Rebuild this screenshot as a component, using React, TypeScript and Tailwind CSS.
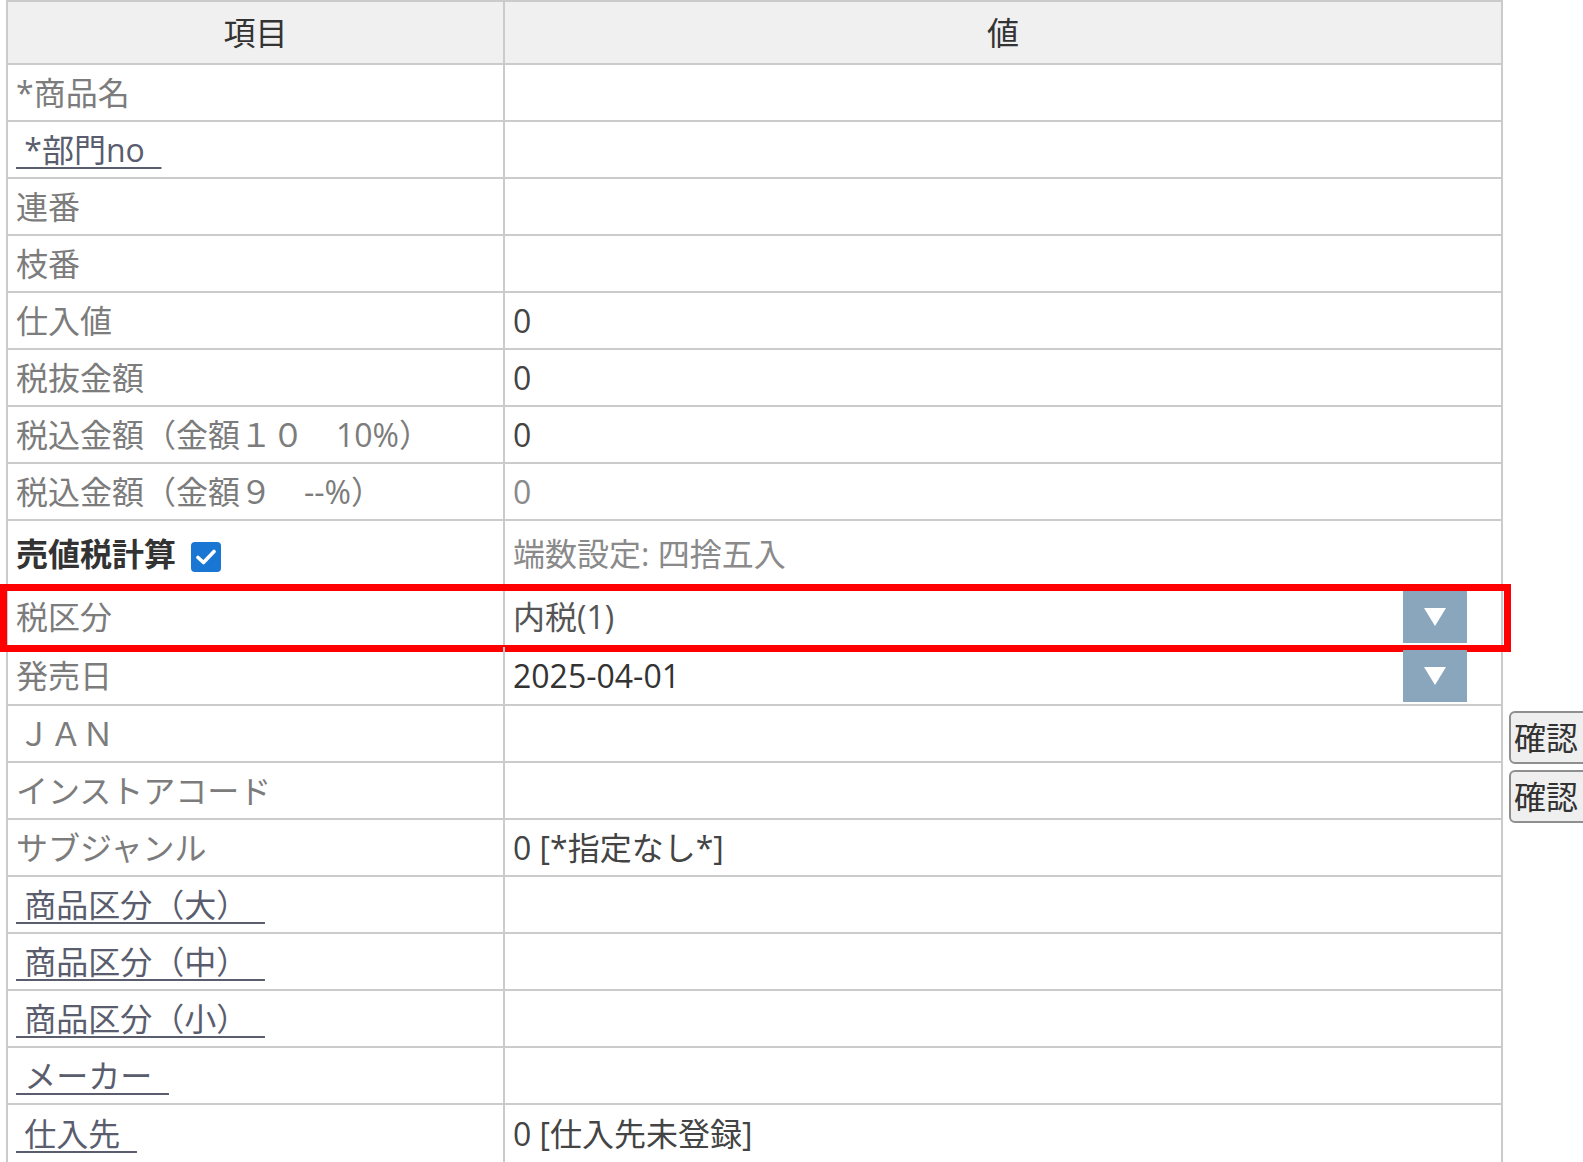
import type { ReactNode } from "react"

const LINE = "border-[#cbcbcb]"

interface RowProps {
  label: ReactNode
  children?: ReactNode
  h?: string
  last?: boolean
  overlay?: ReactNode
}

function Row({ label, children, h = "h-[57px]", last, overlay }: RowProps) {
  return (
    <div className={`relative flex ${h} ${last ? "" : "border-b-2 border-[#cbcbcb]"}`}>
      <div className={`w-[497px] shrink-0 border-r-2 ${LINE} flex items-center pl-[8px] text-[#7c7c7c]`}>
        {label}
      </div>
      <div className="flex-1 flex items-center pl-[8px] text-[#444]">{children}</div>
      {overlay}
    </div>
  )
}

function LinkLabel({ text }: { text: string }) {
  return (
    <span className="underline decoration-2 underline-offset-[5px] text-[#5a5d6e] decoration-[#5a5d6e]">
      {"\u00a0" + text + "\u00a0\u00a0"}
    </span>
  )
}

function SelectValue({ text, color }: { text: string; color: string }) {
  return (
    <div className="flex-1 flex items-center justify-between pr-[34px]">
      <span className={color}>{text}</span>
      <div className="w-[64px] h-[52px] bg-[#8aa6bd] flex items-center justify-center">
        <svg width="22" height="18" viewBox="0 0 22 18">
          <path d="M0 0 L22 0 L11 18 Z" fill="#ffffff" />
        </svg>
      </div>
    </div>
  )
}

function Checkbox() {
  return (
    <span className="ml-[15px] mt-[6px] inline-flex w-[30px] h-[30px] rounded-[4px] bg-[#1976d2] items-center justify-center">
      <svg width="20" height="16" viewBox="0 0 20 16">
        <path d="M2 8.5 L7.5 13.5 L18 2.5" fill="none" stroke="#ffffff" strokeWidth="3.6" strokeLinecap="round" strokeLinejoin="round" />
      </svg>
    </span>
  )
}

export default function App() {
  return (
    <div className="w-[1583px] h-[1162px] overflow-hidden bg-white flex items-start pl-[6px] font-['Open_Sans','Noto_Sans_CJK_JP',sans-serif] text-[32px] leading-none">
      <div className={`w-[1497px] shrink-0 border-2 ${LINE}`}>
        <div className={`flex h-[63px] bg-[#f0f0f0] border-b-2 ${LINE} text-[#333]`}>
          <div className={`w-[497px] shrink-0 border-r-2 ${LINE} flex items-center justify-center`}>項目</div>
          <div className="flex-1 flex items-center justify-center">値</div>
        </div>

        <Row label="*商品名" />
        <Row label={<LinkLabel text="*部門no" />} />
        <Row label="連番" />
        <Row label="枝番" />
        <Row label="仕入値">0</Row>
        <Row label="税抜金額">0</Row>
        <Row label="税込金額（金額１０　10%）">0</Row>
        <Row label="税込金額（金額９　--%）">
          <span className="text-[#8a8a8a]">0</span>
        </Row>
        <Row
          h="h-[67px]"
          label={
            <span className="flex items-center font-bold text-[#333]">
              売値税計算
              <Checkbox />
            </span>
          }
        >
          <span className="text-[#8a8a8a]">端数設定: 四捨五入</span>
        </Row>
        <Row
          h="h-[59px]"
          label="税区分"
          overlay={
            <div className="absolute -top-[4px] -bottom-[7px] -left-[8px] -right-[10px] border-[7px] border-[#ff0000] pointer-events-none" />
          }
        >
          <SelectValue text="内税(1)" color="text-[#555]" />
        </Row>
        <Row h="h-[59px]" label="発売日">
          <SelectValue text="2025-04-01" color="text-[#333]" />
        </Row>
        <Row label={<span className="pl-[2px]">ＪＡＮ</span>} />
        <Row label="インストアコード" />
        <Row label="サブジャンル">0 [*指定なし*]</Row>
        <Row label={<LinkLabel text="商品区分（大）" />} />
        <Row label={<LinkLabel text="商品区分（中）" />} />
        <Row label={<LinkLabel text="商品区分（小）" />} />
        <Row label={<LinkLabel text="メーカー" />} />
        <Row last label={<LinkLabel text="仕入先" />}>
          0 [仕入先未登録]
        </Row>
      </div>

      <div className="ml-[6px] mt-[711px] flex flex-col gap-[6px] shrink-0">
        <button className="w-[80px] h-[53px] border-2 border-[#8f8f8f] rounded-[6px] bg-[#efefef] text-[#333] text-left pl-[3px]">
          確認
        </button>
        <button className="w-[80px] h-[53px] border-2 border-[#8f8f8f] rounded-[6px] bg-[#efefef] text-[#333] text-left pl-[3px]">
          確認
        </button>
      </div>
    </div>
  )
}
